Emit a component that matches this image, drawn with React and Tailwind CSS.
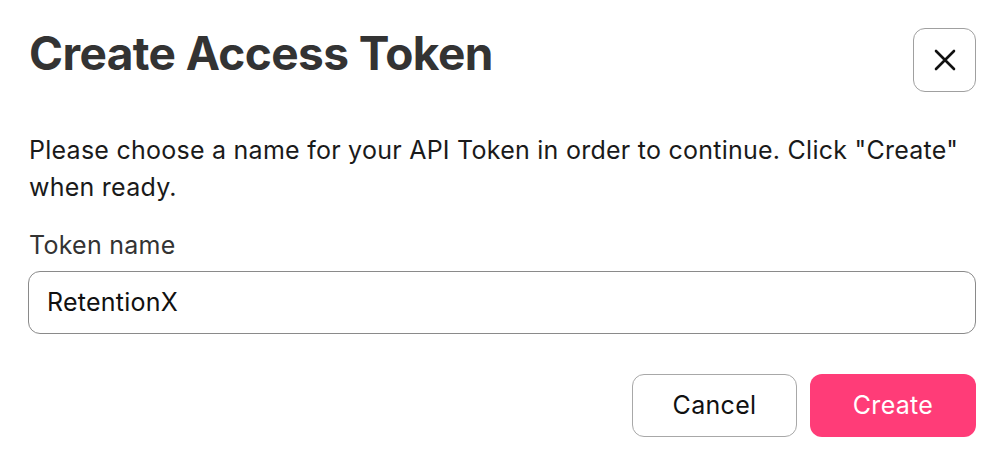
export default function App() {
  return (
    <div className="w-[1004px] h-[464px] bg-white font-['Inter',sans-serif] px-[28px] pt-[28px]">
      <div className="flex items-start justify-between h-[64px]">
        <h1 className="text-[46px] leading-[50px] font-bold text-[#333333] ml-[1px] tracking-[-0.6px]">Create Access Token</h1>
        <button className="w-[63px] h-[64px] rounded-[12px] border border-[#a0a0a0] flex items-center justify-center">
          <svg width="24" height="24" viewBox="0 0 24 24" fill="none" stroke="#111" strokeWidth="2.6" strokeLinecap="round">
            <path d="M3 3L21 21M21 3L3 21" />
          </svg>
        </button>
      </div>
      <p className="mt-[40px] text-[25px] leading-[37px] tracking-[0.25px] text-[#1a1a1a] ml-[1px]">
        Please choose a name for your API Token in order to continue. Click "Create" when ready.
      </p>
      <div className="mt-[21px] text-[25px] leading-[37px] tracking-[0.25px] text-[#333333] ml-[1px]">Token name</div>
      <div className="mt-[7px] h-[63px] w-[948px] rounded-[12px] border border-[#8a8a8a] flex items-center px-[18px] text-[25px] tracking-[0.25px] text-[#111111]">
        RetentionX
      </div>
      <div className="mt-[40px] flex justify-end gap-[13px]">
        <button className="w-[165px] h-[63px] rounded-[12px] border border-[#a8a8a8] text-[25px] tracking-[0.3px] text-[#111111]">Cancel</button>
        <button className="w-[166px] h-[63px] rounded-[12px] bg-[#ff3c78] text-[25px] tracking-[0.3px] text-white">Create</button>
      </div>
    </div>
  );
}
